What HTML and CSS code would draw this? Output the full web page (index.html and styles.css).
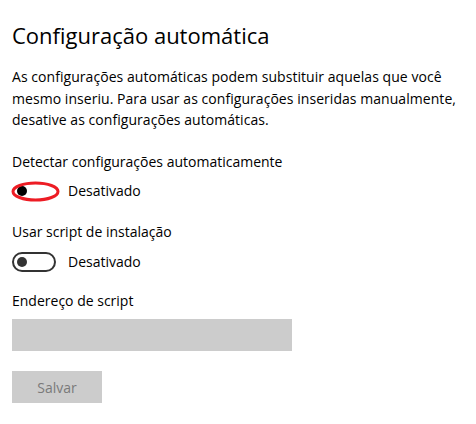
FILE: index.html
```html
<!DOCTYPE html>
<html lang="pt">
<head>
<meta charset="utf-8">
<title>Configuração automática</title>
<link rel="stylesheet" href="styles.css">
</head>
<body>
<main class="page">
  <h1 class="title">Configuração automática</h1>
  <p class="desc">As configurações automáticas podem substituir aquelas que você mesmo inseriu. Para usar as configurações inseridas manualmente, desative as configurações automáticas.</p>

  <div class="label label-first">Detectar configurações automaticamente</div>
  <div class="toggle-row">
    <span class="toggle toggle-annotated">
      <span class="knob"></span>
      <svg class="annotation" width="48" height="21" viewBox="0 0 48 21"><ellipse cx="23.5" cy="10.5" rx="22.5" ry="8.5" fill="none" stroke="#ed1c24" stroke-width="3"/></svg>
    </span>
    <span class="toggle-text">Desativado</span>
  </div>

  <div class="label">Usar script de instalação</div>
  <div class="toggle-row">
    <span class="toggle"><span class="knob"></span></span>
    <span class="toggle-text">Desativado</span>
  </div>

  <div class="label label-address">Endereço de script</div>
  <div class="textbox"></div>

  <button class="btn" disabled>Salvar</button>
</main>
</body>
</html>
```

FILE: styles.css
```css
html, body {
  margin: 0;
  padding: 0;
  background: #ffffff;
}

body {
  font-family: "Open Sans", "Noto Sans", "Liberation Sans", sans-serif;
  color: #000000;
}

.page {
  padding: 19px 12px 0 12px;
}

.title {
  margin: 0;
  font-size: 22px;
  font-weight: 400;
  line-height: 32px;
  color: #000;
}

.desc {
  margin: 15px 0 0 0;
  font-size: 14px;
  line-height: 21.5px;
  letter-spacing: 0.05px;
  width: 456px;
}

.label {
  font-size: 14px;
  line-height: 21.5px;
  margin-top: 20px;
}

.label-address {
  margin-top: 18px;
}

.toggle-row {
  display: flex;
  align-items: center;
  gap: 12px;
  margin-top: 9px;
  height: 20px;
}

.toggle {
  position: relative;
  box-sizing: border-box;
  width: 44px;
  height: 20px;
  border: 2px solid #333333;
  border-radius: 10px;
  display: flex;
  align-items: center;
  padding-left: 3px;
}

.knob {
  width: 10px;
  height: 10px;
  border-radius: 50%;
  background: #333333;
}

.toggle-annotated {
  border-color: transparent;
}

.toggle-annotated .knob {
  background: #000000;
}

.annotation {
  position: absolute;
  left: -2px;
  top: -2px;
  overflow: visible;
}

.toggle-text {
  font-size: 14px;
  line-height: 20px;
}

.textbox {
  margin-top: 8px;
  width: 280px;
  height: 32px;
  background: #cccccc;
}

.btn {
  display: block;
  margin-top: 20px;
  width: 90px;
  height: 32px;
  border: none;
  padding: 0;
  background: #cccccc;
  color: #7a7a7a;
  font-family: inherit;
  font-size: 14px;
}
```
